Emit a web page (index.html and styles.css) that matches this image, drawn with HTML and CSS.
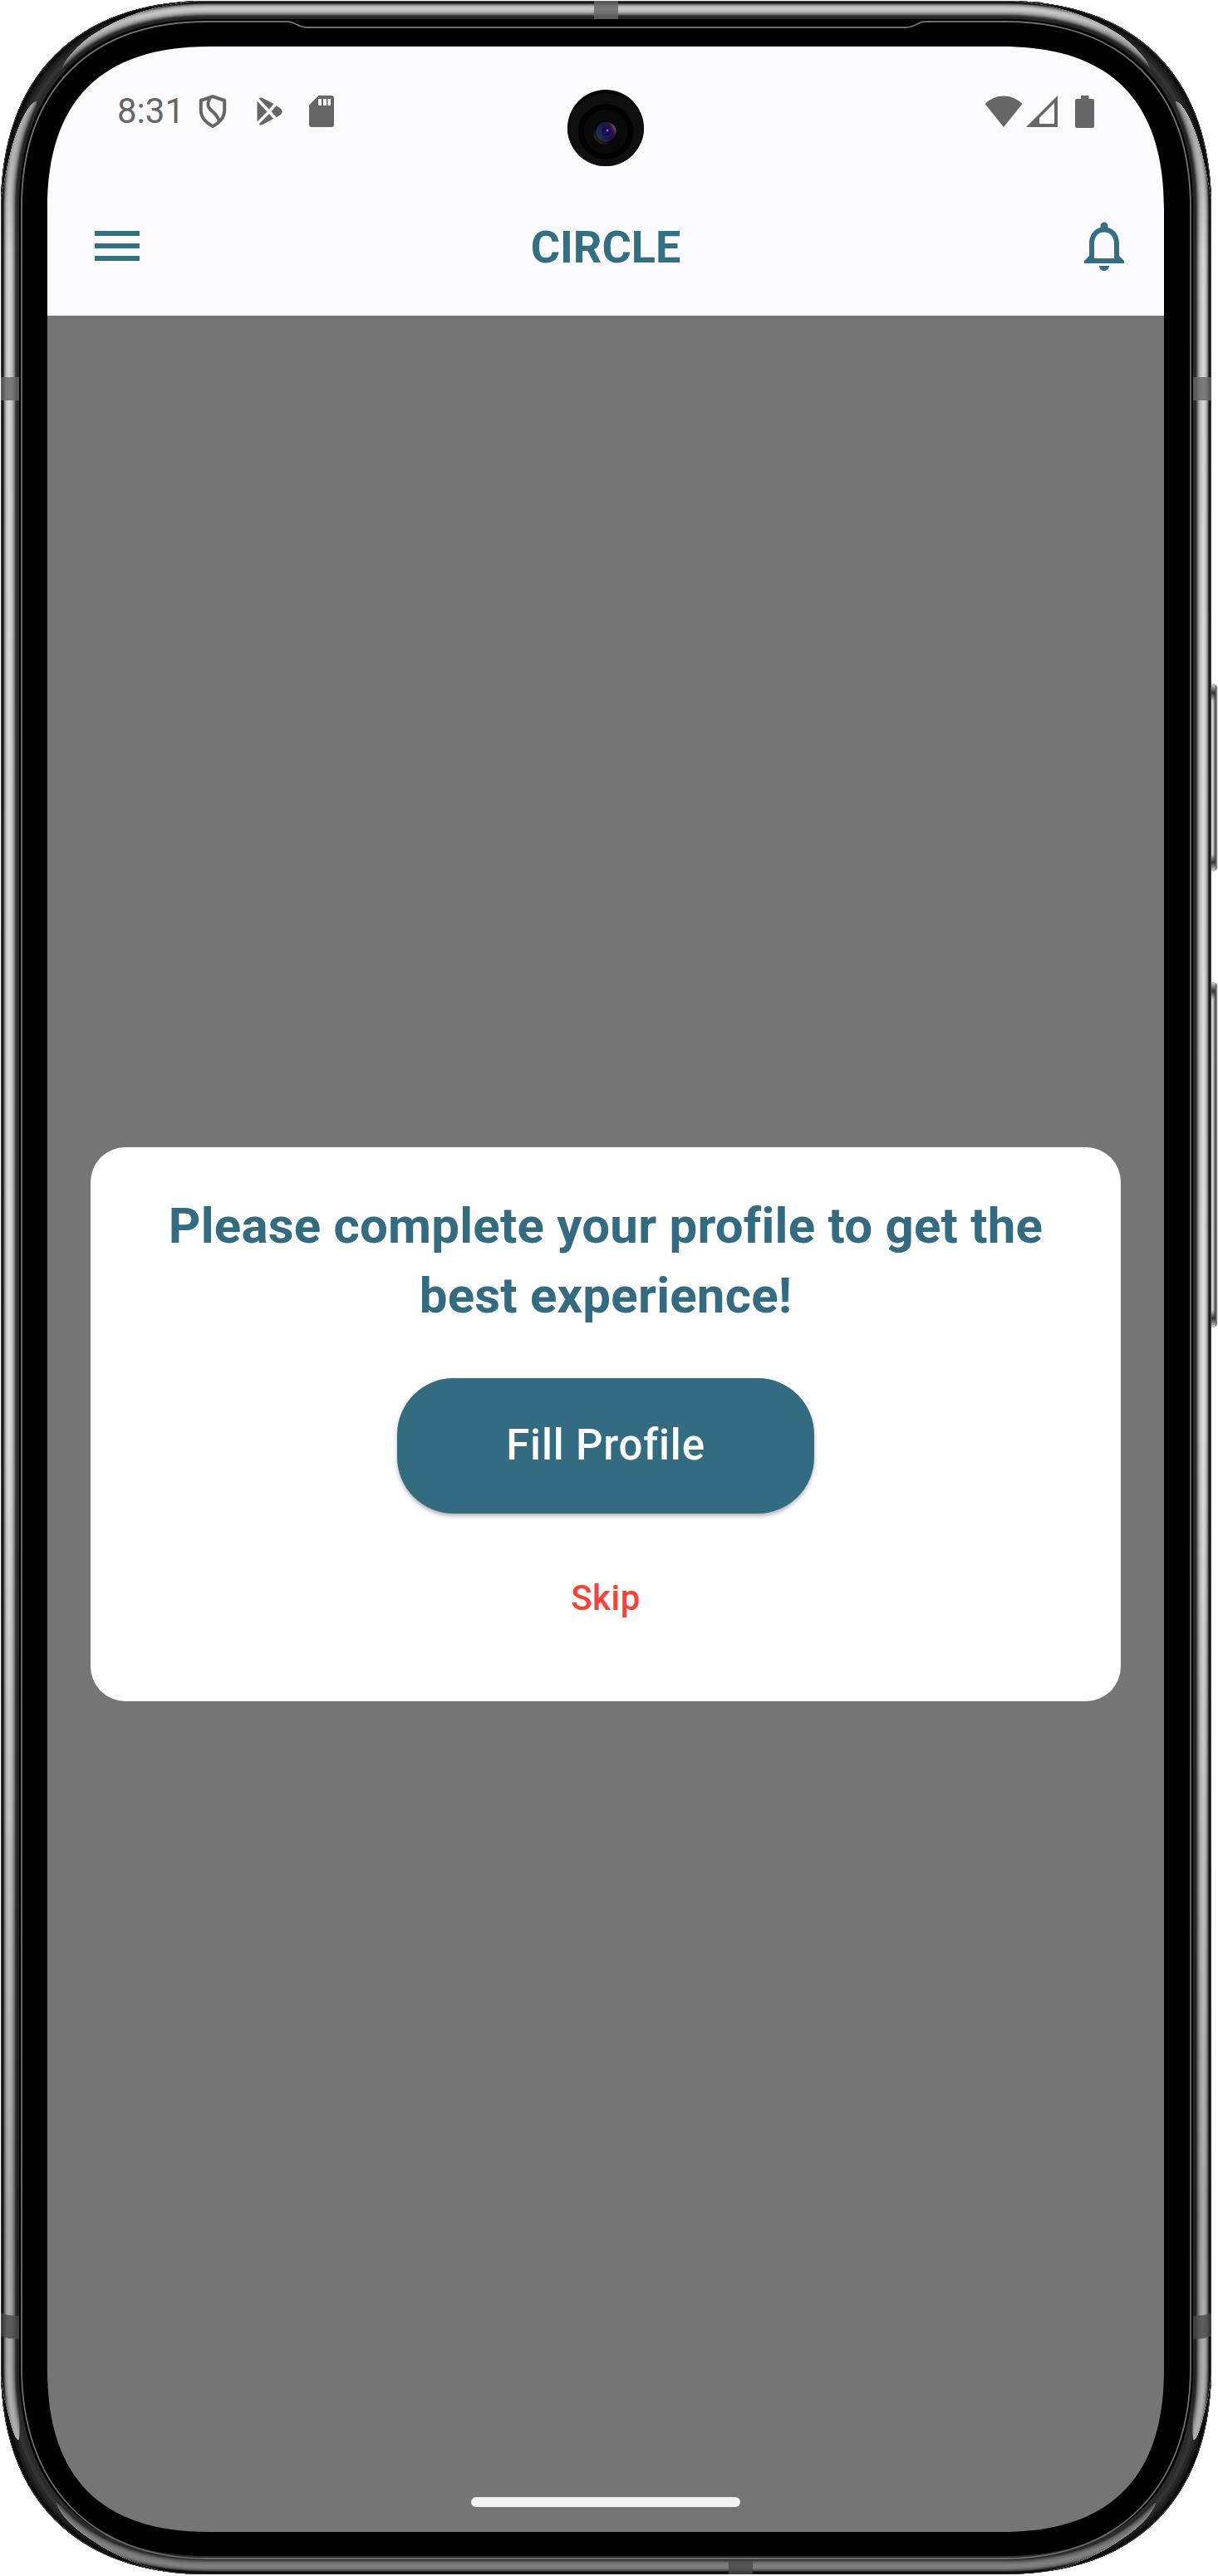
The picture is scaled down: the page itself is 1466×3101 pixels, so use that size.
FILE: index.html
```html
<!DOCTYPE html>
<html lang="en">
<head>
<meta charset="utf-8">
<title>Circle</title>
<link rel="stylesheet" href="styles.css">
</head>
<body>
<div class="phone">
  <main class="screen">
    <div class="status-bar">
      <span class="clock">8:31</span>
      <svg class="icon-shield" width="36" height="42" viewBox="0 0 36 42"><path d="M18 3.200 32.200 8v12c0 8-6 15-14.200 19C10 35 3.800 28 3.800 20V8z" fill="none" stroke="currentColor" stroke-width="4" stroke-linejoin="round"/><path d="M14.500 5.500c-4 7-2 11 2 14.500s9 8 9 13" fill="none" stroke="currentColor" stroke-width="4"/></svg>
      <svg class="icon-play" width="32" height="34" viewBox="0 0 32 34"><path d="M.5 4.500 12.500 17.500.5 29.500zM2.500 1.500Q4.500-.2 7.500 1.200L20.500 8 15 14.800zM2.500 32.500Q4.500 34.200 7.500 32.800L20 26 15 20zM17.500 17.300l6-7 4 2.400q6.500 4.600 0 9.200l-4 2.400z"/></svg>
      <svg class="icon-sd" width="30" height="38" viewBox="0 0 30 38"><path fill-rule="evenodd" d="M11.500 0H27q3 0 3 3v32q0 3-3 3H3q-3 0-3-3V11.500zM11 4v8h4V4zm6 0v8h4V4zm5.500 0v8H26V4z"/></svg>
      <svg class="icon-wifi" width="46" height="38" viewBox="0 0 46 38"><path d="M.5 10Q10 .5 23 .5T45.500 10L23 38z"/></svg>
      <svg class="icon-signal" width="38" height="38" viewBox="0 0 38 38"><path fill-rule="evenodd" d="M38 0v38H0zM34 9 16 27v7h18z"/></svg>
      <svg class="icon-battery" width="23" height="39" viewBox="0 0 23 39"><path d="M7 0h9.500v4H21q2 0 2 2v31q0 2-2 2H2q-2 0-2-2V6q0-2 2-2h5z"/></svg>
    </div>
    <header class="app-bar">
      <svg class="icon" viewBox="0 0 24 24"><path d="M3 18h18v-2H3v2zm0-5h18v-2H3v2zm0-7v2h18V6H3z"/></svg>
      <h1 class="app-title">CIRCLE</h1>
      <svg class="icon" viewBox="0 0 24 24"><path d="M12 22c1.100 0 2-.9 2-2h-4c0 1.100.9 2 2 2zm6-6v-5c0-3.070-1.630-5.640-4.500-6.320V4c0-.83-.67-1.500-1.500-1.500s-1.500.67-1.500 1.500v.68C7.640 5.360 6 7.920 6 11v5l-2 2v1h16v-1l-2-2zm-2 1H8v-6c0-2.480 1.510-4.500 4-4.500s4 2.020 4 4.500v6z"/></svg>
    </header>
    <section class="backdrop">
      <div class="dialog">
        <h2 class="dialog-title">Please complete your profile to get the<br>best experience!</h2>
        <button class="primary">Fill Profile</button>
        <button class="skip">Skip</button>
      </div>
    </section>
    <div class="home-bar"></div>
    <svg class="camera" viewBox="0 0 92 92">
      <defs>
        <linearGradient id="lens" x1="0" y1="0.700" x2="1" y2="0.200"><stop offset="0" stop-color="#1f3a45"/><stop offset=".45" stop-color="#1a1550"/><stop offset=".75" stop-color="#2b1238"/><stop offset="1" stop-color="#93649c"/></linearGradient>
        <linearGradient id="rim" x1="0" y1="1" x2="1" y2="0"><stop offset="0" stop-color="#3a3a3a"/><stop offset=".4" stop-color="#050505"/><stop offset="1" stop-color="#000"/></linearGradient>
        <clipPath id="hole"><circle cx="46" cy="46" r="46"/></clipPath>
      </defs>
      <circle cx="46" cy="46" r="46" fill="#000"/>
      <circle cx="46" cy="50.500" r="46" fill="#0f0f0f" clip-path="url(#hole)"/>
      <circle cx="46" cy="50.500" r="33.300" fill="#000"/>
      <circle cx="46" cy="50.500" r="26.500" fill="#090909"/>
      <circle cx="45.500" cy="51.500" r="14.500" fill="url(#rim)"/>
      <circle cx="46.500" cy="50.500" r="12" fill="url(#lens)"/>
      <circle cx="46.500" cy="50" r="5" fill="#130b46"/>
      <circle cx="48" cy="49" r="2.200" fill="#3417a0"/>
      <circle cx="48" cy="49" r="1" fill="#a284ff"/>
      <circle cx="44.500" cy="52.500" r="1" fill="#2c1bb0"/>
    </svg>
  </main>
  <svg class="frame" width="1466" height="3101" viewBox="0 0 1466 3101">
    <defs>
      <path id="shell" d="M1 250C1 92 92 1 250 1H1209C1367 1 1458 92 1458 250V2850C1458 3008 1367 3099 1209 3099H250C92 3099 1 3008 1 2850Z"/>
      <clipPath id="inside"><use href="#shell"/></clipPath>
      <clipPath id="lit">
        <path d="M44 122C35 124 21 150 12 187Q4 220 0 250V2850L5 2885 12 2913Q19 2940 23 2936L24 2880V240Q27 190 36 155 44 132 44 122Z"/>
        <path d="M44 122C35 124 21 150 12 187Q4 220 0 250V2850L5 2885 12 2913Q19 2940 23 2936L24 2880V240Q27 190 36 155 44 132 44 122Z" transform="matrix(-1 0 0 1 1459 0)"/>
        <path d="M74 85C76 75 90 58 110 43Q170 3 260 0H1199Q1289 3 1349 43C1369 58 1383 75 1385 85Q1375 84 1342 58 1280 25 1200 24H259Q179 25 117 58 84 84 74 85Z"/>
        <path d="M68 3013Q76 3035 110 3057 160 3092 230 3101H1229Q1299 3092 1349 3057 1383 3035 1391 3013 1375 3025 1345 3050 1280 3084 1200 3082H259Q179 3084 114 3050 84 3025 68 3013Z"/>
      </clipPath>
      <linearGradient id="shade" x1="0" y1="0" x2="0" y2="1">
        <stop offset="0" stop-color="#000" stop-opacity=".06"/>
        <stop offset=".02" stop-color="#000" stop-opacity=".24"/>
        <stop offset=".05" stop-color="#000" stop-opacity=".22"/>
        <stop offset=".1" stop-color="#000" stop-opacity=".04"/>
        <stop offset=".55" stop-color="#000" stop-opacity="0"/>
        <stop offset=".86" stop-color="#000" stop-opacity=".24"/>
        <stop offset=".95" stop-color="#000" stop-opacity=".2"/>
        <stop offset=".97" stop-color="#000" stop-opacity=".42"/>
        <stop offset="1" stop-color="#000" stop-opacity=".42"/>
      </linearGradient>
      <linearGradient id="key" x1="0" x2="1" y1="0" y2="0"><stop offset="0" stop-color="#333"/><stop offset=".15" stop-color="#d8d8d8"/><stop offset=".55" stop-color="#d0d0d0"/><stop offset=".8" stop-color="#444"/><stop offset="1" stop-color="#bbb"/></linearGradient>
      <linearGradient id="key-ends" x1="0" x2="0" y1="0" y2="1"><stop offset="0" stop-color="#ccc"/><stop offset=".5" stop-color="#333"/><stop offset="1" stop-color="#333" stop-opacity="0"/></linearGradient>
    </defs>

    <rect x="1453" y="823" width="12.500" height="226" rx="6" fill="url(#key)"/>
    <rect x="1458" y="824" width="5" height="20" fill="url(#key-ends)"/>
    <rect x="1458" y="1028" width="5" height="20" fill="url(#key-ends)" transform="rotate(180 1460.500 1038)"/>
    <rect x="1453" y="1182" width="12.500" height="416" rx="6" fill="url(#key)"/>
    <rect x="1458" y="1183" width="5" height="20" fill="url(#key-ends)"/>
    <rect x="1458" y="1577" width="5" height="20" fill="url(#key-ends)" transform="rotate(180 1460.500 1587)"/>

    <path fill="#000" fill-rule="evenodd" d="M1 250C1 92 92 1 250 1H1209C1367 1 1458 92 1458 250V2850C1458 3008 1367 3099 1209 3099H250C92 3099 1 3008 1 2850ZM57 251V2853C57 2983 122 3048 252 3048H1206C1336 3048 1401 2983 1401 2853V251C1401 121 1336 56 1206 56H252C122 56 57 121 57 251Z"/>
    <g clip-path="url(#inside)" fill="none">
      <use href="#shell" stroke="#2b2b2b" stroke-width="44"/>
      <use href="#shell" stroke="#333" stroke-width="34"/>
      <use href="#shell" stroke="#282828" stroke-width="24"/>
      <use href="#shell" stroke="#1c1c1c" stroke-width="17"/>
      <use href="#shell" stroke="#0d0d0d" stroke-width="10"/>
      <use href="#shell" stroke="#555" stroke-width="1.500"/>
      <g clip-path="url(#lit)">
        <use href="#shell" stroke="#4a4a4a" stroke-width="37"/>
        <use href="#shell" stroke="#777" stroke-width="34"/>
        <use href="#shell" stroke="#959595" stroke-width="32"/>
        <use href="#shell" stroke="#acacac" stroke-width="30"/>
        <use href="#shell" stroke="#c2c2c2" stroke-width="28"/>
        <use href="#shell" stroke="#d2d2d2" stroke-width="25"/>
        <use href="#shell" stroke="#dcdcdc" stroke-width="22"/>
        <use href="#shell" stroke="#d0d0d0" stroke-width="17"/>
        <use href="#shell" stroke="#bdbdbd" stroke-width="14"/>
        <use href="#shell" stroke="#a2a2a2" stroke-width="12"/>
        <use href="#shell" stroke="#808080" stroke-width="10"/>
        <use href="#shell" stroke="#444" stroke-width="8"/>
        <use href="#shell" stroke="#181818" stroke-width="6"/>
        <use href="#shell" stroke="#555" stroke-width="1.500"/>
        <rect width="1466" height="3101" fill="url(#shade)"/>
      </g>
      <g fill="#666" fill-opacity=".82">
        <path d="M1 454H23V482H1ZM1436 454H1458V482H1436ZM715 1H744V23H715Z"/>
      </g>
      <g fill="#484848" fill-opacity=".8">
        <path d="M1 2784 10 2787 23 2788V2816L10 2815 1 2812ZM1458 2784 1449 2787 1436 2788V2816L1449 2815 1458 2812ZM877 3083H906V3099H877Z"/>
      </g>
    </g>
    <path fill="none" stroke="#6d6d6d" stroke-width="1.800" d="M26 250C26 108 108 26 250 26H345C356 26 358 33 370 33H1090C1102 33 1104 26 1114 26H1209C1351 26 1433 108 1433 250V2850C1433 2990 1351 3080 1209 3080H250C108 3080 26 2990 26 2850Z"/>
  </svg>
</div>
</body>
</html>
```
FILE: styles.css
```css
* { box-sizing: border-box; }
body { margin: 0; background: #fff; font-family: Roboto, sans-serif; }
svg { display: block; flex: none; }
.phone { position: relative; width: 1466px; height: 3101px; padding: 56px 65px 53px 57px; }
.frame { position: absolute; top: 0; left: 0; }
.screen {
  position: relative;
  display: flex;
  flex-direction: column;
  height: 2992px;
  background: #fbfbfd;
  border-radius: 150px;
  overflow: hidden;
}
.status-bar {
  display: flex;
  align-items: center;
  height: 156px;
  padding: 0 84px 0 84px;
  color: #666;
  fill: #666;
}
.clock { width: 78px; margin-top: -1px; font-size: 42px; line-height: 49px; white-space: nowrap; }
.icon-shield { margin-left: 19px; }
.icon-play { margin-left: 35px; }
.icon-sd { margin-left: 31px; }
.icon-wifi { margin-left: auto; }
.icon-signal { margin-left: 4px; }
.icon-battery { margin-left: 21px; }
.app-bar {
  display: flex;
  align-items: center;
  justify-content: space-between;
  height: 168px;
  padding: 0 36px 0 48px;
  color: #336e82;
  fill: #336e82;
}
.icon { width: 72px; height: 72px; }
.app-title { margin: 4px 0 0; padding-right: 12px; font-size: 54px; font-weight: 700; line-height: 64px; }
.backdrop {
  flex: 1;
  display: flex;
  align-items: center;
  justify-content: center;
  background: #757575;
}
.dialog {
  display: flex;
  flex-direction: column;
  align-items: center;
  width: 1240px;
  height: 667px;
  padding-top: 53px;
  border-radius: 42px;
  background: #fff;
}
.dialog-title {
  margin: 0;
  color: #336b80;
  font-size: 60px;
  font-weight: 700;
  line-height: 84px;
  letter-spacing: 0.22px;
  text-align: center;
  white-space: nowrap;
}
button { border: 0; padding: 0; font-family: inherit; font-weight: 500; }
.primary {
  width: 502px;
  height: 163px;
  margin-top: 57px;
  padding-bottom: 2px;
  border-radius: 68px;
  background: #336b80;
  color: #fff;
  font-size: 51px;
  letter-spacing: 0.8px;
  box-shadow: 0 3px 5px rgba(0, 0, 0, .3);
}
.skip {
  margin-top: 54px;
  height: 96px;
  background: none;
  color: #f94234;
  font-size: 42px;
  letter-spacing: 0.5px;
}
.home-bar {
  position: absolute;
  bottom: 30px;
  left: 510px;
  width: 324px;
  height: 12px;
  border-radius: 6px;
  background: #f3f3f3;
}
.camera { position: absolute; top: 52px; left: 626px; width: 92px; height: 92px; }
```
